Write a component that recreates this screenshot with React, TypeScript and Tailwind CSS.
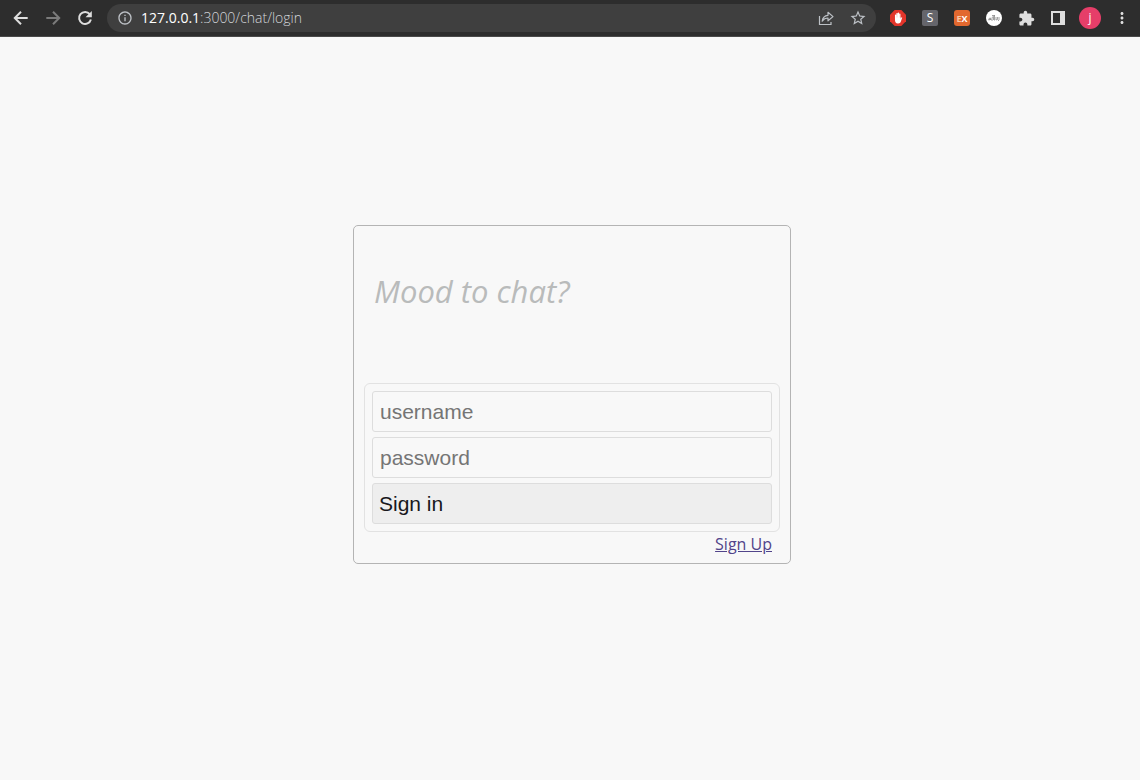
import { useId } from "react";
import { MdExtension, MdMoreVert, MdOutlineInfo, MdStarBorder } from "react-icons/md";

function ArrowIcon({ flipped = false }: { flipped?: boolean }) {
  return (
    <svg viewBox="0 0 20 20" className="size-5" fill="none" stroke="currentColor" strokeWidth="2" aria-hidden="true">
      <path d={flipped ? "M3.300 10h12.500M10 3.800l6.200 6.200-6.200 6.200" : "M16.700 10H4.200M10 3.800L3.800 10l6.200 6.200"} />
    </svg>
  );
}

function ReloadIcon() {
  return (
    <svg viewBox="0 0 20 20" className="size-5" aria-hidden="true">
      <path d="M14.800 6.200A6 6 0 1 0 15.900 11.500" fill="none" stroke="currentColor" strokeWidth="2" />
      <path d="M16.800 3v6.300h-6.300z" fill="currentColor" />
    </svg>
  );
}

function ShareIcon() {
  return (
    <svg viewBox="0 0 16 16" className="size-4" fill="none" stroke="currentColor" strokeWidth="1.2" aria-hidden="true">
      <path d="M1.500 6v8.500h11.500v-2.500" />
      <path d="M4.200 11.200C4.600 7.600 6.800 5.600 10 5.300V2.300L15 6.600l-5 4.200V8C7.400 8 5.600 9 4.200 11.200z" strokeLinejoin="round" />
    </svg>
  );
}

function HandBadge() {
  return (
    <svg viewBox="0 0 16 16" className="size-4" aria-hidden="true">
      <path d="M4.700 0h6.600L16 4.700v6.600L11.300 16H4.700L0 11.300V4.700z" fill="#e2352b" />
      <path
        d="M5.600 9.500V5.200M7 8V3.600M8.400 8V3.100M9.800 8V4.200"
        stroke="#fff"
        strokeWidth="1.300"
        strokeLinecap="round"
      />
      <path d="M5 7.500h5.500v1.200l.9-1.300c.6-.4 1 .1.700.7l-1.300 3.600c-.5 1.100-1.200 1.700-2.400 1.700h-.7C6 13.400 5 12.100 5 10.200z" fill="#fff" />
    </svg>
  );
}

function RoundBadge() {
  return (
    <svg viewBox="0 0 16 16" className="size-4" aria-hidden="true">
      <circle cx="8" cy="8" r="8" fill="#fff" />
      <path
        d="M3 10.500v-2l1.500-.5v2M6 11V7.500l1.500-1V10M8.500 5v5.500M10 7v3l1.500-.5V7M13 7v3l-1 1M2.500 9.500h3M6 5.500h3"
        fill="none"
        stroke="#8a8a8a"
        strokeWidth=".8"
      />
    </svg>
  );
}

function SidePanelIcon() {
  return (
    <svg viewBox="0 0 14 14" className="size-3.5" aria-hidden="true">
      <path d="M0 0h14v14H0zM2 2v10h7V2z" fill="currentColor" fillRule="evenodd" />
    </svg>
  );
}

const slot = "flex size-8 shrink-0 items-center justify-center";

function BrowserBar() {
  return (
    <header className="flex h-[37px] items-center border-b border-[#4a4a4a] bg-[#2d2d2d] pr-0.5 pl-[5px] font-['Open_Sans','Noto_Sans',sans-serif] text-[#dedede]">
      <button type="button" aria-label="Back" className={slot}>
        <ArrowIcon />
      </button>
      <button type="button" aria-label="Forward" className={`${slot} text-[#7b7b7b]`}>
        <ArrowIcon flipped />
      </button>
      <button type="button" aria-label="Reload" className={slot}>
        <ReloadIcon />
      </button>
      <div className="ml-1.5 flex h-7 min-w-0 flex-1 items-center rounded-full bg-[#3f3f3f] pr-0.5 pl-2.5 text-[#bdc1c6]">
        <MdOutlineInfo className="size-4 shrink-0" />
        <p className="ml-2 min-w-0 flex-1 truncate text-sm font-light text-[#d2d5d9]">
          <span className="font-normal text-white">127.0.0.1</span>:3000/chat/login
        </p>
        <button type="button" aria-label="Share this page" className={slot}>
          <ShareIcon />
        </button>
        <button type="button" aria-label="Bookmark this tab" className={slot}>
          <MdStarBorder className="size-[18px]" />
        </button>
      </div>
      <nav aria-label="Extensions" className="ml-1.5 flex items-center">
        <button type="button" aria-label="Content blocker" className={slot}>
          <HandBadge />
        </button>
        <button type="button" className={slot}>
          <span className="flex size-4 items-center justify-center rounded-xs bg-[#65656b] text-xs leading-none text-white">S</span>
        </button>
        <button type="button" className={slot}>
          <span className="flex size-4 items-center justify-center rounded-[3px] bg-[#e2682f] text-[9px] leading-none font-bold text-white">
            <span className="text-[#f8c9a8]">E</span>X
          </span>
        </button>
        <button type="button" aria-label="API extension" className={slot}>
          <RoundBadge />
        </button>
        <button type="button" aria-label="Extensions" className={slot}>
          <MdExtension className="size-[17px]" />
        </button>
        <button type="button" aria-label="Side panel" className={slot}>
          <SidePanelIcon />
        </button>
        <button type="button" className={slot}>
          <span className="flex size-[22px] items-center justify-center rounded-full bg-[#e63e69] text-xs leading-none text-white">j</span>
        </button>
        <button type="button" aria-label="Menu" className={slot}>
          <MdMoreVert className="size-[18px]" />
        </button>
      </nav>
    </header>
  );
}

const field =
  "h-[41px] w-full rounded-[3px] border border-[#dddddd] bg-[#f8f8f8] px-[7px] text-[21px] text-[#222222] outline-none placeholder:text-[#757575] focus:border-[#999999]";

function LoginCard() {
  const id = useId();
  return (
    <section className="w-full max-w-[438px] rounded-[5px] border border-[#b4b4b4] px-2.5 pb-[7px]">
      <h1 className="px-2.5 pt-[43px] pb-[70px] font-['Open_Sans','Noto_Sans',sans-serif] text-[31px] leading-[44px] text-[#b9bbbb] italic">
        Mood to chat?
      </h1>
      <form
        className="flex flex-col gap-[5px] rounded-md border border-[#e2e2e2] p-[7px] font-['Liberation_Sans',Arial,sans-serif]"
        onSubmit={(event) => event.preventDefault()}
      >
        <input id={`${id}-user`} aria-label="username" type="text" placeholder="username" className={field} />
        <input id={`${id}-pass`} aria-label="password" type="password" placeholder="password" className={field} />
        <button type="submit" className="h-[41px] rounded-[3px] border border-[#dddddd] bg-[#eeeeee] px-1.5 text-left text-[21px] text-[#18181c]">
          Sign in
        </button>
      </form>
      <p className="pr-2 text-right font-['Open_Sans','Noto_Sans',sans-serif] text-base">
        <a href="/chat/signup" className="text-[#51448a] underline">
          Sign Up
        </a>
      </p>
    </section>
  );
}

export default function App() {
  return (
    <div className="flex min-h-screen flex-col bg-[#f8f8f8]">
      <BrowserBar />
      <main className="flex flex-1 items-center justify-center pb-7 pl-1">
        <LoginCard />
      </main>
    </div>
  );
}
